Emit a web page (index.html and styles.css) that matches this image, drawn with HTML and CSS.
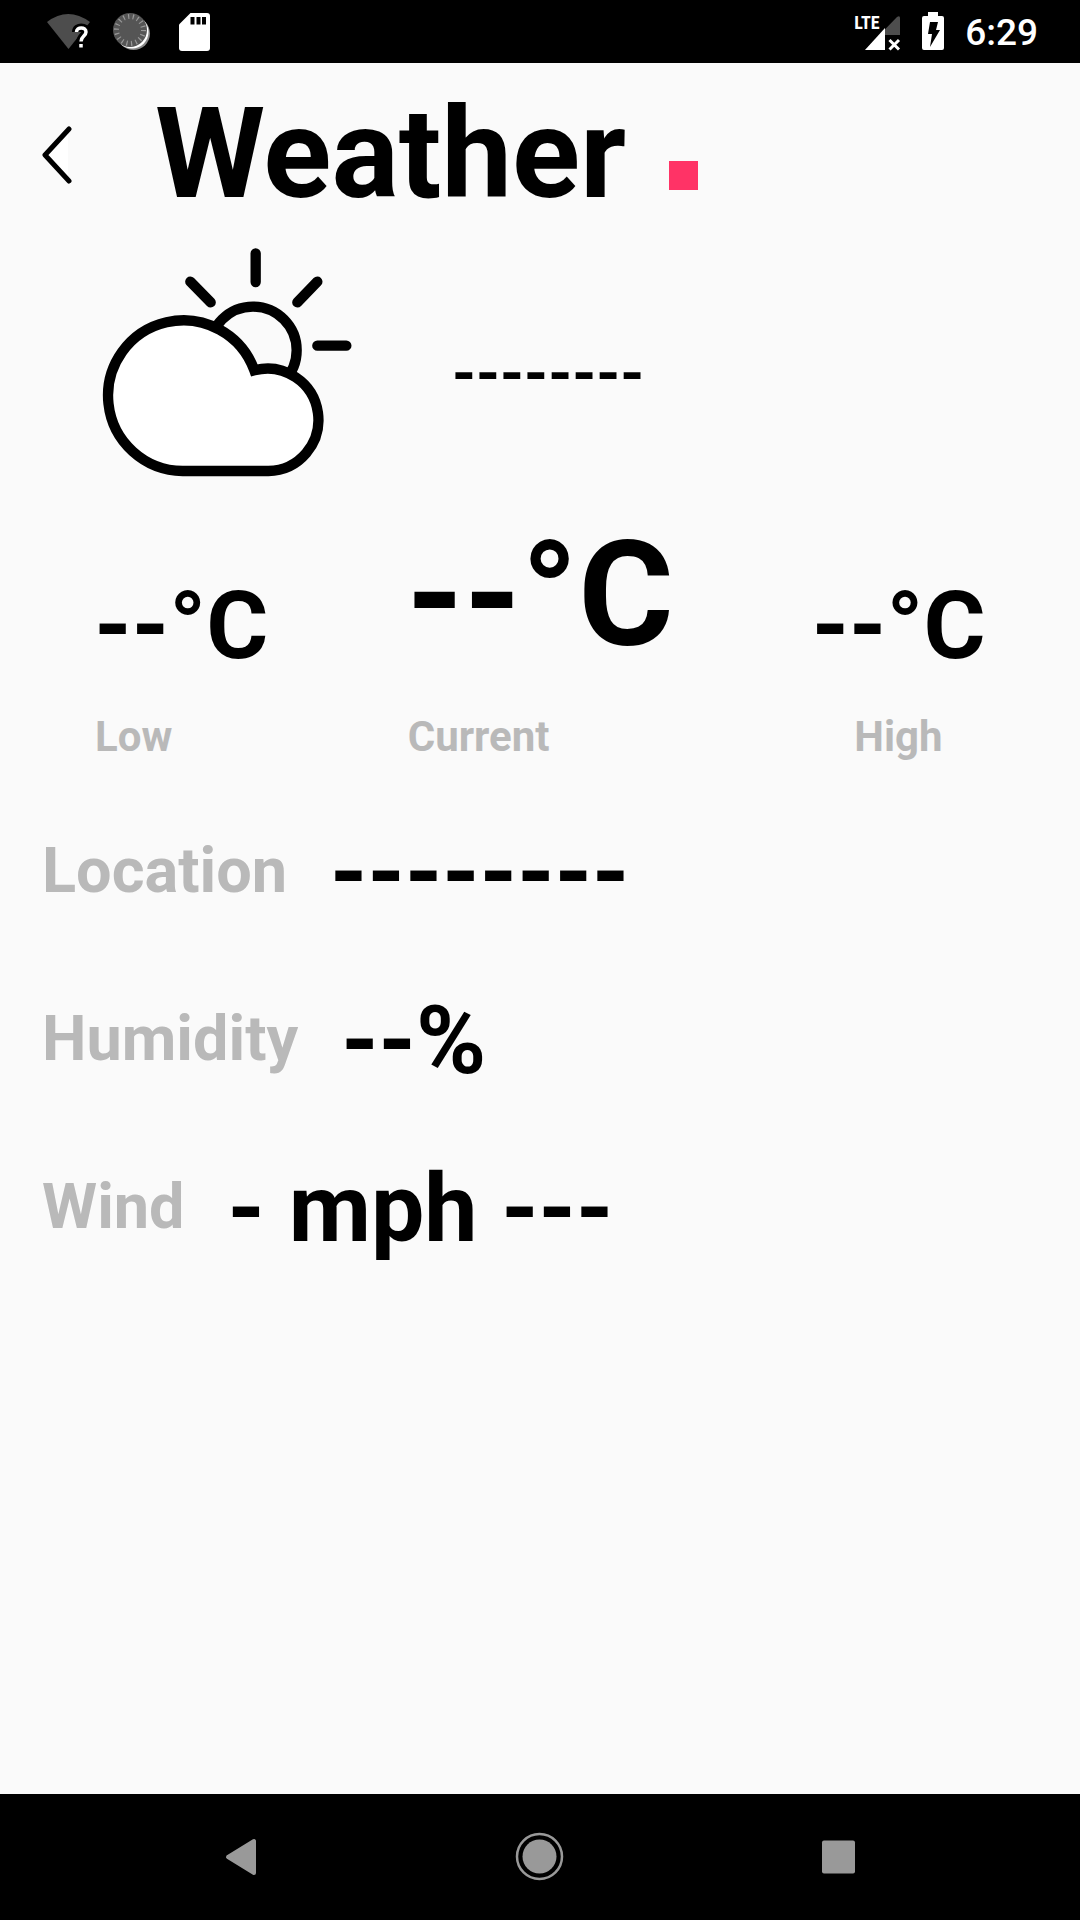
FILE: index.html
```html
<!DOCTYPE html>
<html lang="en">
<head>
<meta charset="utf-8">
<meta name="viewport" content="width=device-width, initial-scale=1">
<title>Weather</title>
<link rel="stylesheet" href="styles.css">
</head>
<body>
<div class="screen">
  <div class="status">
    <div class="status-group status-left">
      <svg width="48" height="40" viewBox="0 0 48 40" aria-hidden="true">
        <path d="M1 10 Q22 -6 44 10 L22.500 37 Z" fill="#4d4d4d"/>
        <path d="M30.500 20 C30.500 14.500 40 14.500 40 20 C40 24 35 24 35 29.500 M35 31.500 V35" fill="none" stroke="#000" stroke-width="9"/>
        <path d="M30.500 20 C30.500 14.500 40 14.500 40 20 C40 24 35 24 35 29.500 M35 32 V35.500" fill="none" stroke="#fff" stroke-width="3.500"/>
      </svg>
      <svg width="49" height="40" viewBox="0 0 49 40" aria-hidden="true">
        <circle cx="21.500" cy="21.500" r="16.500" fill="#888"/>
        <circle cx="20" cy="20" r="16.500" fill="#fff"/>
        <circle cx="18" cy="18" r="17" fill="#555"/>
        <circle cx="18" cy="18" r="13.500" fill="none" stroke="#999" stroke-width="5" stroke-dasharray="1.200 3.512"/>
      </svg>
      <svg width="31" height="40" viewBox="0 0 31 40" aria-hidden="true">
        <path d="M11.500 1 H28 Q31 1 31 4 V36 Q31 39 28 39 H3 Q0 39 0 36 V12.500 Z" fill="#fff"/>
        <path d="M11.500 5 h4 v7.500 h-4z M17.500 5 h4 v7.500 h-4z M23 5 h4 v7.500 h-4z" fill="#000"/>
      </svg>
    </div>
    <div class="status-group status-right">
      <div class="signal">
        <svg width="47" height="40" viewBox="0 0 47 40" aria-hidden="true">
          <path d="M11 38 L43 5 Q46 3 46 6 V23 H31 V38 Z" fill="#4d4d4d"/>
          <path d="M11 38 L31 16 V38 Z" fill="#fff"/>
          <path d="M35.500 28 L45 37.500 M45 28 L35.500 37.500" stroke="#fff" stroke-width="3"/>
        </svg>
        <span class="lte">LTE</span>
      </div>
      <svg width="22" height="40" viewBox="0 0 22 40" aria-hidden="true">
        <path d="M6 0 H16 V4 H20 Q22 4 22 6 V36 Q22 38 20 38 H2 Q0 38 0 36 V6 Q0 4 2 4 H6 Z" fill="#fff"/>
        <path d="M8 10 H16 L14 18 H18 L8 35 L10 22 H6 Z" fill="#000"/>
      </svg>
      <time class="clock">6:29</time>
    </div>
  </div>

  <header class="header">
    <button class="back" aria-label="Back">
      <svg width="32" height="60" viewBox="0 0 32 60" aria-hidden="true">
        <path d="M28 5 V58 L5 31 Z" fill="#fff"/>
        <path d="M29 5 L5 31 L29 57" fill="none" stroke="#000" stroke-width="5" stroke-linecap="round" stroke-linejoin="round"/>
      </svg>
    </button>
    <h1 class="title">Weather</h1>
    <span class="dot"></span>
  </header>

  <main>
    <section class="condition">
      <svg width="254" height="232" viewBox="60 48 762 696" role="img" aria-label="Partly cloudy" fill="none" stroke="#000" stroke-width="31">
        <circle cx="519" cy="361" r="131"/>
        <path d="M308 723 A226 226 0 1 1 523 421 A153.500 153.500 0 1 1 565 723 Z" fill="#fff"/>
        <path d="M527 70 V156 M331 155 L392 217 M712 155 L652 217 M712 347 H799" stroke-linecap="round"/>
      </svg>
      <p class="summary">--------</p>
    </section>

    <section class="temps">
      <div class="temp">
        <p class="value">--°C</p>
        <p class="caption caption-low">Low</p>
      </div>
      <div class="temp">
        <p class="value value-current">--°C</p>
        <p class="caption caption-current">Current</p>
      </div>
      <div class="temp">
        <p class="value">--°C</p>
        <p class="caption caption-high">High</p>
      </div>
    </section>

    <dl class="details">
      <div class="detail"><dt>Location</dt><dd>--------</dd></div>
      <div class="detail"><dt>Humidity</dt><dd>--%</dd></div>
      <div class="detail"><dt>Wind</dt><dd>- mph ---</dd></div>
    </dl>
  </main>

  <nav class="navbar">
    <button aria-label="Back">
      <svg width="60" height="60" viewBox="0 0 60 60" aria-hidden="true"><path d="M17 30 L43 14 V46 Z" fill="#999" stroke="#999" stroke-width="4" stroke-linejoin="round"/></svg>
    </button>
    <button aria-label="Home">
      <svg width="60" height="60" viewBox="0 0 60 60" aria-hidden="true"><circle cx="29.500" cy="29.500" r="17" fill="#999"/><circle cx="29.500" cy="29.500" r="22.500" fill="none" stroke="#999" stroke-width="2.500"/></svg>
    </button>
    <button aria-label="Overview">
      <svg width="60" height="60" viewBox="0 0 60 60" aria-hidden="true"><rect x="13" y="13.500" width="33" height="33" rx="2" fill="#999"/></svg>
    </button>
  </nav>
</div>
</body>
</html>
```
FILE: styles.css
```css
* {
  box-sizing: border-box;
  margin: 0;
  padding: 0;
}

body {
  background: #fafafa;
  color: #000;
  font-family: Roboto, sans-serif;
  font-weight: 700;
}

svg {
  display: block;
  flex: none;
}

button {
  border: 0;
  background: none;
  cursor: pointer;
}

.screen {
  display: flex;
  flex-direction: column;
  min-height: 100vh;
}

.status {
  display: flex;
  align-items: center;
  justify-content: space-between;
  height: 63px;
  padding: 0 42px 0 46px;
  background: #000;
  color: #fff;
}

.status-group {
  display: flex;
  align-items: center;
}

.status-left {
  gap: 18px;
}

.status-right {
  gap: 21px;
}

.signal {
  position: relative;
}

.lte {
  position: absolute;
  top: 0;
  left: 0;
  font-family: "Roboto Condensed", "Liberation Sans Narrow", Roboto, sans-serif;
  font-size: 18px;
  line-height: 22px;
}

.clock {
  padding-top: 2px;
  font-size: 37px;
  font-weight: 500;
  line-height: 42px;
}

.header {
  display: flex;
  align-items: center;
  height: 182px;
  padding: 0 40px;
}

.back {
  margin-right: 83px;
}

.title {
  font-size: 126px;
  line-height: 148px;
}

.dot {
  width: 29px;
  height: 29px;
  margin: 43px 0 0 43px;
  background: #ff3366;
}

.condition {
  display: flex;
  align-items: center;
  gap: 98px;
  padding: 1px 100px 0;
}

.summary {
  padding-top: 22px;
  font-size: 61px;
  line-height: 74px;
}

.temps {
  display: grid;
  grid-template-columns: repeat(3, 1fr);
  margin-top: 32px;
  padding: 0 2px;
}

.temp {
  display: grid;
  grid-template-rows: 202px 60px;
}

.value {
  align-self: end;
  font-size: 95px;
  line-height: 172px;
  text-align: center;
}

.value-current {
  align-self: start;
  font-size: 146px;
}

.caption {
  color: #b9b9b9;
  font-size: 42px;
  line-height: 50px;
}

.caption-low {
  padding-left: 93px;
}

.caption-current {
  padding-left: 47px;
}

.caption-high {
  padding-left: 135px;
}

.details {
  display: flex;
  flex-direction: column;
  gap: 56px;
  margin-top: 45px;
  padding: 0 42px;
}

.detail {
  display: flex;
  align-items: flex-start;
  gap: 43px;
}

dt {
  color: #b9b9b9;
  font-size: 63px;
  line-height: 108px;
}

dd {
  font-size: 95px;
  line-height: 112px;
}

.navbar {
  display: flex;
  align-items: center;
  justify-content: center;
  gap: 239px;
  height: 126px;
  margin-top: auto;
  background: #000;
}
```
